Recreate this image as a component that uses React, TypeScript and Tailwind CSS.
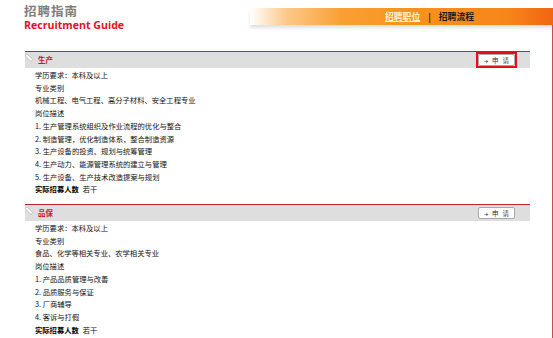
import React from "react";

type Job = {
    title: string;
    edu: string;
    majors: string;
    duties: string[];
    count: string;
    marked?: boolean;
};

const jobs: Job[] = [
    {
        title: "生产",
        edu: "学历要求：本科及以上",
        majors: "机械工程、电气工程、高分子材料、安全工程专业",
        duties: [
            "1. 生产管理系统组织及作业流程的优化与整合",
            "2. 制造管理，优化制造体系，整合制造资源",
            "3. 生产设备的投资、规划与统筹管理",
            "4. 生产动力、能源管理系统的建立与管理",
            "5. 生产设备、生产技术改造提案与规划",
        ],
        count: "若干",
        marked: true,
    },
    {
        title: "品保",
        edu: "学历要求：本科及以上",
        majors: "食品、化学等相关专业、农学相关专业",
        duties: ["1. 产品品质管理与改善", "2. 品质服务与保证", "3. 厂商辅导", "4. 客诉与打假"],
        count: "若干",
    },
];

const Tab = () => (
    <svg width="10" height="10" viewBox="0 0 10 10" className="shrink-0 -mt-[4px] -ml-[1px]">
        <path d="M1 2.5 L3 0.8 L8.5 6.5 L7 8.5 Z" fill="#fff" stroke="#b8b8b8" strokeWidth="0.8" />
    </svg>
);

const ApplyButton = ({ marked }: { marked?: boolean }) => (
    <div
        className={
            marked
                ? "w-[41px] h-[16px] border-2 border-[#e3101a] flex items-center justify-center"
                : "w-[41px] h-[16px] flex items-center justify-center"
        }
    >
        <div className="w-[37px] h-[12px] bg-white border border-[#a9a9a9] rounded-[2px] flex items-center justify-center gap-[4px] text-[6.5px] leading-none text-[#333]">
            <span className="text-[5px]">➔</span>
            <span>申</span>
            <span>请</span>
        </div>
    </div>
);

const Section = ({ job }: { job: Job }) => (
    <div className="w-[505px] ml-[25px]">
        <div className="h-[17px] border-t border-[#c0262c] bg-[#dedede] flex items-center pr-[13px]">
            <Tab />
            <span className="ml-[4px] text-[7.5px] font-bold text-[#d3131b]">{job.title}</span>
            <div className="flex-1" />
            <ApplyButton marked={job.marked} />
        </div>
        <div className="pl-[10px] pt-[1px] text-[7.3px] leading-[12.7px] text-[#111]">
            <div>{job.edu}</div>
            <div>专业类别</div>
            <div>{job.majors}</div>
            <div>岗位描述</div>
            {job.duties.map((d) => (
                <div key={d}>{d}</div>
            ))}
            <div>
                <span className="font-bold text-black">实际招募人数</span>
                <span className="ml-[4px]">{job.count}</span>
            </div>
        </div>
    </div>
);

export default function App() {
    return (
        <div
            className="w-[553px] h-[338px] overflow-hidden bg-white flex flex-col"
            style={{ fontFamily: '"Noto Sans CJK SC", "Liberation Sans", sans-serif' }}
        >
            {/* top banner */}
            <div className="h-[25px] flex shrink-0">
                <div className="w-[250px] pl-[24px] pt-[4px] relative z-10">
                    <div className="text-[12.5px] leading-[14px] font-bold text-[#7d7d7d] tracking-[1px]">招聘指南</div>
                    <div
                        className="mt-[1px] text-[10.6px] leading-[12px] font-bold text-[#e5101e]"
                        style={{ fontFamily: '"Open Sans", "Liberation Sans", sans-serif' }}
                    >
                        Recruitment Guide
                    </div>
                </div>
                <div className="flex-1 mt-[8px] h-[17px] bg-[linear-gradient(to_right,rgba(255,255,255,0)_0%,#fcc98a_12%,#f9a033_30%,#f7911c_55%,#f7861a_85%,#f06510_100%)] shadow-[0_3px_3px_rgba(0,0,0,0.12)] flex items-center pl-[135px] text-[8.8px] font-bold">
                    <span className="text-[#fff4c8] underline">招聘职位</span>
                    <span className="mx-[8px] text-[#222]">|</span>
                    <span className="text-[#1a1a1a]">招聘流程</span>
                </div>
            </div>

            {/* listings */}
            <div className="flex-1 border-r border-[#c0504d] pt-[26px] flex flex-col gap-[8px]">
                {jobs.map((j) => (
                    <Section key={j.title} job={j} />
                ))}
            </div>
        </div>
    );
}
